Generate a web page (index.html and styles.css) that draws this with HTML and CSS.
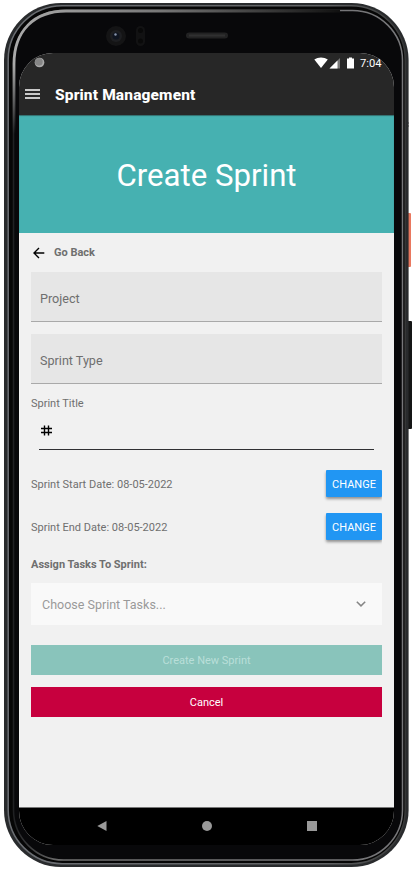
FILE: index.html
```html
<!DOCTYPE html>
<html lang="en">
<head>
<meta charset="utf-8">
<title>Sprint Management</title>
<link rel="stylesheet" href="styles.css">
</head>
<body>
<div class="device">
  <svg class="shell" viewBox="0 0 414 872" aria-hidden="true">
    <defs>
      <linearGradient id="outer" x1="0" y1="0" x2="1" y2="0">
        <stop offset="0" stop-color="#6b6e73"/><stop offset=".8" stop-color="#606264"/><stop offset="1" stop-color="#363737"/>
      </linearGradient>
      <linearGradient id="rim" x1="0" y1="0" x2="1" y2="0">
        <stop offset="0" stop-color="#202123"/><stop offset=".12" stop-color="#707070"/><stop offset="1" stop-color="#77777a"/>
      </linearGradient>
      <linearGradient id="shine" x1="0" y1="0" x2="1" y2="0">
        <stop offset="0" stop-color="#aaa"/><stop offset=".45" stop-color="#777"/><stop offset="1" stop-color="#111"/>
      </linearGradient>
      <linearGradient id="fade" x1="0" y1="0" x2="0" y2="1">
        <stop offset="0" stop-color="#aaa"/><stop offset="1" stop-color="#aaa" stop-opacity="0"/>
      </linearGradient>
    </defs>
    <path d="M406 123h3M406 126h3" stroke="#555"/>
    <rect x="406" y="213" width="5" height="54" rx="1" fill="#e9785f"/>
    <rect x="406" y="321" width="6" height="108" rx="1" fill="#151616"/>
    <rect x="4" y="3" width="404.600" height="864" rx="57" fill="#292b2d"/>
    <rect x="8.200" y="5.700" width="397" height="858" rx="54" fill="#060606" stroke="url(#outer)" stroke-width="1.500"/>
    <rect x="13.500" y="10.500" width="389" height="849.500" rx="50" fill="#08080a" stroke="url(#rim)" stroke-width="1.500"/>
    <path d="M14 64C14 31 34 11 66 11H340" fill="none" stroke="url(#shine)" stroke-width="2.800"/>
    <rect x="12.600" y="64" width="2.800" height="70" fill="url(#fade)"/>
    <circle cx="116" cy="36" r="10" fill="#141415"/><circle cx="116" cy="36" r="6" fill="#1d1e21"/><circle cx="116" cy="36" r="3.500" fill="#0e1420"/><circle cx="115.500" cy="34.500" r="1.200" fill="#8793aa"/>
    <rect x="136" y="26" width="9" height="20" rx="4.500" fill="#121213"/><circle cx="140.500" cy="30.500" r="2.500" fill="#090909"/><circle cx="140.500" cy="41" r="2.500" fill="#090909"/>
    <rect x="186" y="32.500" width="42" height="6" rx="3" fill="#222223"/><path d="M189 35.500H225" stroke="#303031" stroke-width="2"/>
  </svg>
  <div class="screen">
    <div class="status">
      <svg class="dot" viewBox="0 0 12 12"><circle cx="6" cy="6" r="5.300" fill="#aaa"/><circle cx="5.300" cy="5.300" r="4.200" fill="#858585"/></svg>
      <svg class="signals" viewBox="0 0 42 12">
        <path d="M.3 2.600C4-.3 10-.3 13.800 2.600L7 11z" fill="#fff"/>
        <path d="M26 1v10.500H15.500z" fill="#777"/><path d="M23.500 3.500v8h-8z" fill="#fff"/>
        <path d="M33 1.500h2V.500h3v1h2v10h-7z" fill="#fff"/>
      </svg>
      <span class="clock">7:04</span>
    </div>
    <header class="appbar">
      <svg class="menu" viewBox="0 0 15 10"><path d="M0 1h15M0 5h15M0 9h15" stroke="#fff" stroke-width="1.500"/></svg>
      <span>Sprint Management</span>
    </header>
    <div class="hero">Create Sprint</div>
    <main class="form">
      <div class="back">
        <svg viewBox="0 0 12 12"><path d="M11.300 6H1M6 1L1 6l5 5" fill="none" stroke="#000" stroke-width="1.400"/></svg>
        <b>Go Back</b>
      </div>
      <div class="field">Project</div>
      <div class="field">Sprint Type</div>
      <div class="label">Sprint Title</div>
      <div class="title-input">
        <svg viewBox="0 0 11 11"><path d="M0 3.500h11M0 7.500h11M3.500 .5v10M7.500 .5v10" stroke="#000" stroke-width="1.400"/></svg>
      </div>
      <div class="date"><span>Sprint Start Date: 08-05-2022</span><span class="change">CHANGE</span></div>
      <div class="date"><span>Sprint End Date: 08-05-2022</span><span class="change">CHANGE</span></div>
      <b class="assign">Assign Tasks To Sprint:</b>
      <div class="select"><span>Choose Sprint Tasks...</span>
        <svg viewBox="0 0 10 6"><path d="M.8.700L5 4.900 9.200.700" fill="none" stroke="#858585" stroke-width="1.500"/></svg>
      </div>
      <div class="button create">Create New Sprint</div>
      <div class="button cancel">Cancel</div>
    </main>
    <nav class="nav">
      <svg viewBox="0 0 10 10"><path d="M9.500 0v10L.3 5z" fill="#999"/></svg>
      <svg viewBox="0 0 10 10"><circle cx="5" cy="5" r="5" fill="#999"/></svg>
      <svg viewBox="0 0 10 10"><path d="M0 0h10v10H0z" fill="#999"/></svg>
    </nav>
  </div>
</div>
</body>
</html>
```
FILE: styles.css
```css
* { box-sizing: border-box; }
body { margin: 0; background: #fff; font-family: Roboto, sans-serif; font-size: 11px; color: #6f6f6f; }
svg { display: block; flex: none; }
.device { position: relative; width: 414px; height: 872px; padding: 53px 20px 27px 19px; overflow: hidden; }
.shell { position: absolute; left: 0; top: 0; width: 414px; height: 872px; }
.screen { position: relative; width: 375px; height: 792px; display: flex; flex-direction: column; background: #f1f1f1; border-radius: 34px; overflow: hidden; white-space: nowrap; }
.status { height: 20px; display: flex; align-items: center; padding: 0 12px 0 15px; background: #272727; color: #fff; }
.dot { width: 11px; height: 11px; margin-top: -1px; }
.signals { width: 42px; height: 12px; margin-left: auto; }
.clock { font-size: 11.2px; margin-left: 4px; width: 22px; }
.appbar { height: 42px; display: flex; align-items: center; padding-left: 6px; gap: 15px; background: #272727; color: #fff; font-size: 15.5px; font-weight: 800; letter-spacing: .14px; }
.appbar span { padding-top: 1px; }
.menu { width: 15px; height: 10px; }
.hero { height: 118px; display: flex; align-items: center; justify-content: center; background: #46b1b1; color: #fff; font-size: 31.2px; padding-top: 3px; box-shadow: inset 0 1px 1px #326d6d; }
.form { flex: 1; display: flex; flex-direction: column; padding: 0 12px; }
.back { height: 39px; display: flex; align-items: center; gap: 9px; padding-left: 2px; }
.back svg { width: 12px; height: 12px; }
.field { height: 50px; margin-bottom: 12px; padding: 4px 9px 0; display: flex; align-items: center; background: #e6e6e6; border-bottom: 1px solid #a9a9a9; font-size: 12.6px; }
.label { height: 15px; line-height: 15px; }
.title-input { height: 39px; margin: 0 8px; padding: 14px 0 0 2px; border-bottom: 1px solid #303033; }
.title-input svg { width: 11px; height: 11px; }
.date { height: 27px; margin-top: 16px; display: flex; justify-content: space-between; align-items: center; }
.date > span:first-child { padding-top: 2px; }
.title-input + .date { margin-top: 20px; }
.change { width: 56px; height: 27px; display: flex; justify-content: center; align-items: center; padding-top: 1px; border-radius: 1px; background: #2196f3; color: #fff; box-shadow: 0 2px 3px rgba(0,0,0,.4); clip-path: inset(0 0 -8px -5px); }
.assign { padding-top: 17px; height: 31px; line-height: 15px; }
.select { height: 42px; margin-top: 12px; padding: 0 16px 0 11px; display: flex; align-items: center; justify-content: space-between; background: #f9f9f9; color: #999; font-size: 12.5px; }
.select svg { width: 10px; height: 6px; }
.button { height: 30px; display: flex; align-items: center; justify-content: center; padding-top: 1px; }
.create { margin-top: 20px; background: #89c4bb; color: #b9dfd9; }
.cancel { margin-top: 12px; background: #c7003e; color: #fff; }
.nav { height: 38px; display: flex; justify-content: center; gap: 95px; padding: 14px 0 0 0; background: #000; box-shadow: inset 0 1px #777; }
.nav svg { width: 10px; height: 10px; }
```
